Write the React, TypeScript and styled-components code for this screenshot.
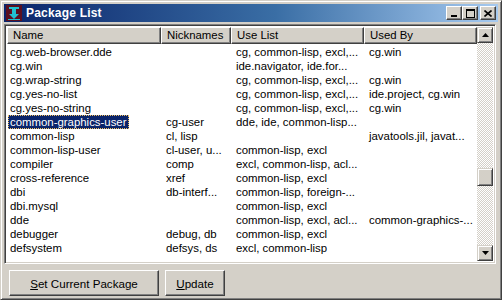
import React from "react";
import styled, { createGlobalStyle } from "styled-components";

const GlobalStyle = createGlobalStyle`
body {
  margin: 0;
  background-color: #d4d0c8;
  font-family: "Liberation Sans", Arial, sans-serif;
  font-size: 11.4px;
}
`;

const face = "#d4d0c8";

const Window = styled.div`
  width: 502px;
  height: 300px;
  box-sizing: border-box;
  background-color: ${face};
  border: 1px solid;
  border-color: ${face} #404040 #404040 ${face};
  box-shadow: inset 1px 1px 0 #fff, inset -1px -1px 0 #808080;
  padding: 3px;
  display: flex;
  flex-direction: column;
`;

const TitleBar = styled.div`
  height: 18px;
  display: flex;
  align-items: center;
  padding: 0 2px 0 2px;
  background: linear-gradient(to right, #0a246a, #3a6ea5 55%, #a6caf0);
  color: white;
  font-weight: bold;
  font-size: 12px;
`;

const TitleText = styled.span`
  flex: 1;
  margin-left: 4px;
  letter-spacing: 0.2px;
`;

const CapButton = styled.div<{ $gap?: boolean }>`
  width: 16px;
  height: 14px;
  box-sizing: border-box;
  background: ${face};
  border: 1px solid;
  border-color: #fff #404040 #404040 #fff;
  box-shadow: inset -1px -1px 0 #808080;
  margin-left: ${(p) => (p.$gap ? "2px" : "0")};
  display: flex;
  align-items: center;
  justify-content: center;
`;

const ListBox = styled.div`
  margin-top: 2px;
  margin-right: 2px;
  height: 234px;
  border: 1px solid;
  border-color: #808080 #fff #fff #808080;
  box-shadow: inset 1px 1px 0 #404040, inset -1px -1px 0 ${face};
  padding: 2px;
  display: flex;
  background: white;
`;

const ListBody = styled.div`
  flex: 1;
  overflow: hidden;
  display: flex;
  flex-direction: column;
`;

const cols = "154px 70px 133px 1fr";

const Header = styled.div`
  display: grid;
  grid-template-columns: ${cols};
  height: 17px;
`;

const HeaderCell = styled.div`
  box-sizing: border-box;
  background: ${face};
  border: 1px solid;
  border-color: #fff #404040 #404040 #fff;
  box-shadow: inset -1px -1px 0 #808080;
  padding: 1px 5px;
  line-height: 13px;
  white-space: nowrap;
  overflow: hidden;
`;

const Rows = styled.div`
  padding-top: 1px;
`;

const Row = styled.div`
  display: grid;
  grid-template-columns: ${cols};
  height: 14px;
  line-height: 14px;
`;

const Cell = styled.div<{ $first?: boolean }>`
  padding-left: ${(p) => (p.$first ? "3px" : "5px")};
  white-space: nowrap;
  overflow: hidden;
`;

const Selected = styled.span`
  display: inline-block;
  background: #0a246a;
  color: white;
  outline: 1px dotted #f0c060;
  outline-offset: -1px;
  margin-left: -2px;
  padding: 0 3px 0 2px;
`;

const Scrollbar = styled.div`
  width: 16px;
  display: flex;
  flex-direction: column;
  background-color: #fff;
  background-image: conic-gradient(${face} 25%, #fff 0 50%, ${face} 0 75%, #fff 0);
  background-size: 2px 2px;
`;

const ArrowButton = styled.div`
  width: 16px;
  height: 16px;
  box-sizing: border-box;
  background: ${face};
  border: 1px solid;
  border-color: ${face} #404040 #404040 ${face};
  box-shadow: inset 1px 1px 0 #fff, inset -1px -1px 0 #808080;
  display: flex;
  align-items: center;
  justify-content: center;
`;

const Track = styled.div`
  flex: 1;
  display: flex;
  flex-direction: column;
  padding-top: 125px;
`;

const Thumb = styled(ArrowButton)`
  height: 18px;
`;

const ButtonRow = styled.div`
  display: flex;
  gap: 6px;
  padding: 6px 0 0 5px;
`;

const Button = styled.div<{ $w: number }>`
  width: ${(p) => p.$w}px;
  height: 26px;
  box-sizing: border-box;
  background: ${face};
  border: 1px solid;
  border-color: #fff #404040 #404040 #fff;
  box-shadow: inset -1px -1px 0 #808080;
  display: flex;
  align-items: center;
  justify-content: center;
  color: #000;
  font-size: 11.6px;
`;

const Key = styled.span`
  text-decoration: underline;
`;

const rows: [string, string, string, string][] = [
  ["cg.web-browser.dde", "", "cg, common-lisp, excl,...", "cg.win"],
  ["cg.win", "", "ide.navigator, ide.for...", ""],
  ["cg.wrap-string", "", "cg, common-lisp, excl,...", "cg.win"],
  ["cg.yes-no-list", "", "cg, common-lisp, excl,...", "ide.project, cg.win"],
  ["cg.yes-no-string", "", "cg, common-lisp, excl,...", "cg.win"],
  ["common-graphics-user", "cg-user", "dde, ide, common-lisp...", ""],
  ["common-lisp", "cl, lisp", "", "javatools.jil, javat..."],
  ["common-lisp-user", "cl-user, u...", "common-lisp, excl", ""],
  ["compiler", "comp", "excl, common-lisp, acl...", ""],
  ["cross-reference", "xref", "common-lisp, excl", ""],
  ["dbi", "db-interf...", "common-lisp, foreign-...", ""],
  ["dbi.mysql", "", "common-lisp, excl", ""],
  ["dde", "", "common-lisp, excl, acl...", "common-graphics-..."],
  ["debugger", "debug, db", "common-lisp, excl", ""],
  ["defsystem", "defsys, ds", "excl, common-lisp", ""],
];

const AppIcon = () => (
  <svg width="16" height="16" viewBox="0 0 16 16">
    <rect x="0" y="0" width="16" height="16" fill="#5a1020" />
    <rect x="3" y="2" width="10" height="2" fill="#20c0d0" />
    <rect x="6" y="4" width="4" height="5" fill="#20c0d0" />
    <polygon points="3,9 13,9 8,14" fill="#20c0d0" />
    <rect x="2" y="14" width="12" height="1" fill="#20c0d0" />
  </svg>
);

export default function App() {
  return (
    <Window>
      <GlobalStyle />
      <TitleBar>
        <AppIcon />
        <TitleText>Package List</TitleText>
        <CapButton>
          <svg width="8" height="8" viewBox="0 0 8 8">
            <rect x="1" y="6" width="6" height="2" fill="#000" />
          </svg>
        </CapButton>
        <CapButton>
          <svg width="9" height="9" viewBox="0 0 9 9">
            <rect x="0.5" y="0.5" width="8" height="8" fill="none" stroke="#000" />
            <rect x="0" y="1" width="9" height="1" fill="#000" />
          </svg>
        </CapButton>
        <CapButton $gap>
          <svg width="8" height="7" viewBox="0 0 8 7">
            <path d="M0.5 0.5 L7.5 6.5 M7.5 0.5 L0.5 6.5" stroke="#000" strokeWidth="1.6" />
          </svg>
        </CapButton>
      </TitleBar>
      <ListBox>
        <ListBody>
          <Header>
            <HeaderCell>Name</HeaderCell>
            <HeaderCell>Nicknames</HeaderCell>
            <HeaderCell>Use List</HeaderCell>
            <HeaderCell>Used By</HeaderCell>
          </Header>
          <Rows>
            {rows.map((r, i) => (
              <Row key={r[0]}>
                <Cell $first>{i === 5 ? <Selected>{r[0]}</Selected> : r[0]}</Cell>
                <Cell>{r[1]}</Cell>
                <Cell>{r[2]}</Cell>
                <Cell>{r[3]}</Cell>
              </Row>
            ))}
          </Rows>
        </ListBody>
        <Scrollbar>
          <ArrowButton>
            <svg width="7" height="4" viewBox="0 0 7 4">
              <polygon points="3.5,0 7,4 0,4" fill="#000" />
            </svg>
          </ArrowButton>
          <Track>
            <Thumb />
          </Track>
          <ArrowButton>
            <svg width="7" height="4" viewBox="0 0 7 4">
              <polygon points="0,0 7,0 3.5,4" fill="#000" />
            </svg>
          </ArrowButton>
        </Scrollbar>
      </ListBox>
      <ButtonRow>
        <Button $w={150}>
          <span>
            <Key>S</Key>et Current Package
          </span>
        </Button>
        <Button $w={60}>
          <span>
            <Key>U</Key>pdate
          </span>
        </Button>
      </ButtonRow>
    </Window>
  );
}
